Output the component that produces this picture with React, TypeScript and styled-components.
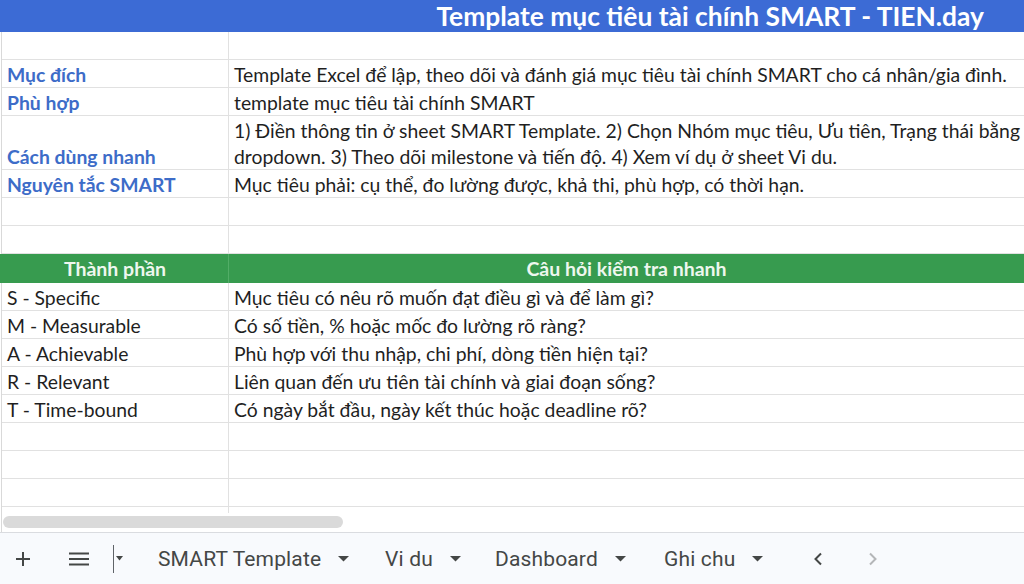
import React from "react";
import styled, { createGlobalStyle } from "styled-components";

const Global = createGlobalStyle`
  html, body { margin: 0; padding: 0; background: #ffffff; }
  body { width: 1024px; height: 584px; overflow: hidden; font-family: Lato, "Noto Sans", sans-serif; }
`;

const Page = styled.div`
  width: 1024px;
  height: 584px;
  display: flex;
  flex-direction: column;
  overflow: hidden;
`;

const Sheet = styled.div`
  flex: 1;
  display: flex;
  flex-direction: column;
  border-left: 1px solid #d9d9d9;
  margin-left: 1px;
`;

const TitleBar = styled.div`
  height: 32px;
  background: #3c6bd5;
  color: #ffffff;
  font-weight: 700;
  font-size: 26.4px;
  display: flex;
  align-items: center;
  justify-content: flex-end;
  padding-right: 40px;
  margin-left: -2px;
  white-space: nowrap;
`;

const Row = styled.div<{ $h?: number }>`
  display: grid;
  grid-template-columns: 226px 1fr;
  height: ${(p) => p.$h ?? 28}px;
  box-sizing: border-box;
  border-bottom: 1px solid #e1e1e1;
`;

const Cell = styled.div<{ $label?: boolean }>`
  display: flex;
  align-items: flex-end;
  padding: 0 5px 0 5px;
  font-size: 19.35px;
  line-height: 24px;
  color: ${(p) => (p.$label ? "#3d6cc8" : "#1f1f1f")};
  font-weight: ${(p) => (p.$label ? 700 : 400)};
  white-space: nowrap;
  overflow: hidden;
  & + & { border-left: 1px solid #e1e1e1; }
`;

const WrapCell = styled(Cell)`
  white-space: normal;
  align-items: flex-start;
  line-height: 26px;
  padding: 2px 0 0 5px;
`;

const HeaderRow = styled.div`
  display: grid;
  grid-template-columns: 226px 1fr;
  height: 29px;
  margin-left: -2px;
  padding-left: 2px;
  background: #379b4f;
`;

const HeaderCell = styled.div`
  display: flex;
  align-items: center;
  justify-content: center;
  color: #eef7ee;
  font-weight: 700;
  font-size: 19.5px;
  & + & { border-left: 1px solid #52ad67; }
`;

const ScrollArea = styled.div`
  height: 24px;
  display: flex;
  align-items: flex-end;
  padding: 0 0 3px 1px;
  box-sizing: border-box;
  position: relative;
`;

const ColTail = styled.div`
  width: 226px;
  height: 6px;
  border-right: 1px solid #e1e1e1;
  position: absolute;
  top: 0;
  left: 0;
`;

const Thumb = styled.div`
  width: 340px;
  height: 12px;
  border-radius: 6px;
  background: #dadada;
`;

const TabBar = styled.div`
  height: 52px;
  flex-shrink: 0;
  box-sizing: border-box;
  border-top: 1px solid #dadce0;
  background: #f8fafd;
  display: flex;
  align-items: center;
  font-family: Roboto, "Noto Sans", sans-serif;
  color: #444746;
`;

const IconBtn = styled.div<{ $w: number; $muted?: boolean }>`
  width: ${(p) => p.$w}px;
  display: flex;
  align-items: center;
  justify-content: center;
  color: ${(p) => (p.$muted ? "#b4b6b8" : "#444746")};
`;

const Divider = styled.div`
  width: 1px;
  height: 28px;
  background: #5f6368;
  margin-left: 1px;
`;

const Spacer = styled.div<{ $w: number }>`
  width: ${(p) => p.$w}px;
`;

const Tab = styled.div<{ $w: number }>`
  width: ${(p) => p.$w}px;
  display: flex;
  align-items: center;
  gap: 17px;
  font-size: 21px;
  letter-spacing: 0.15px;
`;

const Caret = () => (
  <svg width="11" height="6" viewBox="0 0 11 6"><path d="M0 0h11L5.5 5.5z" fill="#444746" /></svg>
);

const rowsTop: [string, string][] = [
  ["", ""],
  ["Mục đích", "Template Excel để lập, theo dõi và đánh giá mục tiêu tài chính SMART cho cá nhân/gia đình."],
  ["Phù hợp", "template mục tiêu tài chính SMART"],
];

const smart: [string, string][] = [
  ["S - Specific", "Mục tiêu có nêu rõ muốn đạt điều gì và để làm gì?"],
  ["M - Measurable", "Có số tiền, % hoặc mốc đo lường rõ ràng?"],
  ["A - Achievable", "Phù hợp với thu nhập, chi phí, dòng tiền hiện tại?"],
  ["R - Relevant", "Liên quan đến ưu tiên tài chính và giai đoạn sống?"],
  ["T - Time-bound", "Có ngày bắt đầu, ngày kết thúc hoặc deadline rõ?"],
  ["", ""],
  ["", ""],
  ["", ""],
];

export default function App() {
  return (
    <Page>
      <Global />
      <Sheet>
        <TitleBar>Template mục tiêu tài chính SMART - TIEN.day</TitleBar>
        {rowsTop.map(([a, b], i) => (
          <Row key={i}>
            <Cell $label>{a}</Cell>
            <Cell>{b}</Cell>
          </Row>
        ))}
        <Row $h={54}>
          <Cell $label>Cách dùng nhanh</Cell>
          <WrapCell>
            1) Điền thông tin ở sheet SMART Template. 2) Chọn Nhóm mục tiêu, Ưu tiên, Trạng thái bằng dropdown. 3) Theo dõi milestone và tiến độ. 4) Xem ví dụ ở sheet Vi du.
          </WrapCell>
        </Row>
        <Row>
          <Cell $label>Nguyên tắc SMART</Cell>
          <Cell>Mục tiêu phải: cụ thể, đo lường được, khả thi, phù hợp, có thời hạn.</Cell>
        </Row>
        <Row>
          <Cell />
          <Cell />
        </Row>
        <Row>
          <Cell />
          <Cell />
        </Row>
        <HeaderRow>
          <HeaderCell>Thành phần</HeaderCell>
          <HeaderCell>Câu hỏi kiểm tra nhanh</HeaderCell>
        </HeaderRow>
        {smart.map(([a, b], i) => (
          <Row key={i}>
            <Cell>{a}</Cell>
            <Cell>{b}</Cell>
          </Row>
        ))}
        <ScrollArea>
          <ColTail />
          <Thumb />
        </ScrollArea>
      </Sheet>
      <TabBar>
        <IconBtn $w={46}>
          <svg width="16" height="16" viewBox="0 0 16 16"><path d="M8 1v14M1 8h14" stroke="#444746" strokeWidth="2" /></svg>
        </IconBtn>
        <IconBtn $w={66}>
          <svg width="20" height="14" viewBox="0 0 20 14"><path d="M0 1.5h20M0 7h20M0 12.5h20" stroke="#444746" strokeWidth="2" /></svg>
        </IconBtn>
        <Divider />
        <IconBtn $w={10}>
          <svg width="7" height="5" viewBox="0 0 7 5"><path d="M0 0h7L3.5 4.5z" fill="#444746" /></svg>
        </IconBtn>
        <Spacer $w={34} />
        <Tab $w={227}>SMART Template<Caret /></Tab>
        <Tab $w={110}>Vi du<Caret /></Tab>
        <Tab $w={169}>Dashboard<Caret /></Tab>
        <Tab $w={143}>Ghi chu<Caret /></Tab>
        <IconBtn $w={22}>
          <svg width="10" height="14" viewBox="0 0 10 14"><path d="M8 1.5L2.5 7 8 12.5" stroke="#444746" strokeWidth="2" fill="none" /></svg>
        </IconBtn>
        <Spacer $w={33} />
        <IconBtn $w={22} $muted>
          <svg width="10" height="14" viewBox="0 0 10 14"><path d="M2 1.5L7.5 7 2 12.5" stroke="#b4b6b8" strokeWidth="2" fill="none" /></svg>
        </IconBtn>
      </TabBar>
    </Page>
  );
}
